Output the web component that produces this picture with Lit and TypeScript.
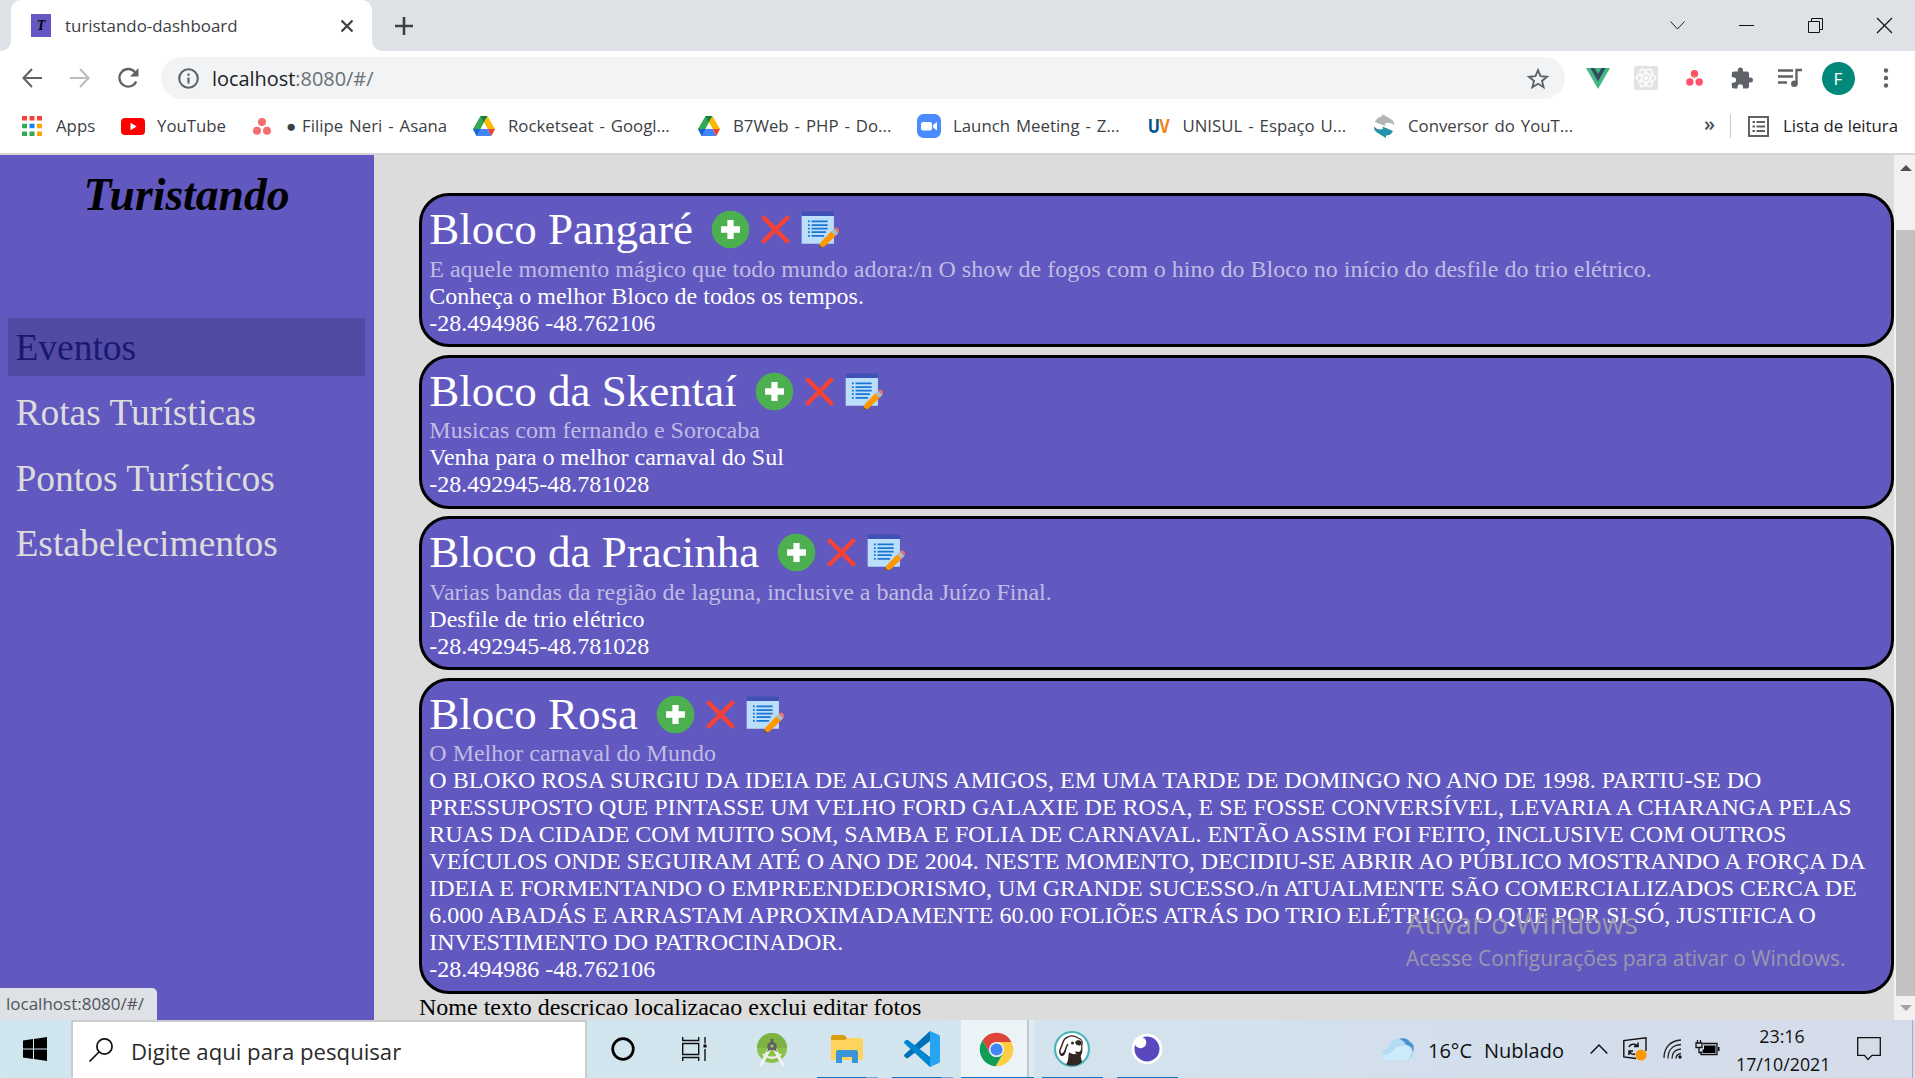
import { LitElement, html, svg, css } from "lit";
import { customElement } from "lit/decorators.js";

const icon = (w: number, h: number, body: unknown) =>
  html`<svg width=${w} height=${h} viewBox="0 0 ${w} ${h}" fill="none">${body}</svg>`;

const drive = icon(22, 20, svg`
  <path d="M7.5 0h7L11 6.3 4.2 19 0 13z" fill="#34a853"/>
  <path d="M7.5 0h7L11 6.3z" fill="#188038"/>
  <path d="M14.500 0 22 13h-7.300L11 6.300z" fill="#fbbc04"/>
  <path d="M7.300 13h7.400l3.600 7H3.700L0 13z" fill="#4285f4"/>
  <path d="M0 13h7.300l-3.600 7z" fill="#1967d2"/>
  <path d="M14.700 13H22l-3.700 7z" fill="#ea4335"/>`);

const bookmarks = [
  { label: "Apps", width: 101, cls: "", art: icon(20, 20, svg`
    <path d="M0 0h5v4.500H0zM7.500 0h5v4.500h-5zM15 0h5v4.500h-5z" fill="#f44336"/>
    <path d="M0 7.700h5v4.500H0zM0 15.500h5V20H0zM7.500 15.500h5V20h-5z" fill="#34a853"/>
    <path d="M7.500 7.700h5v4.500h-5z" fill="#1a82f7"/>
    <path d="M15 7.700h5v4.500h-5zM15 15.500h5V20h-5z" fill="#f9a602"/>`) },
  { label: "YouTube", width: 129, cls: "", art: icon(24, 17, svg`
    <rect width="24" height="17" rx="4" fill="#f00"/><path d="M9.500 4.800v7.400l6.200-3.700z" fill="#fff"/>`) },
  { label: "● Filipe Neri - Asana", width: 222, cls: "", art: icon(18, 17, svg`
    <g fill="#f66d6f"><circle cx="9" cy="4" r="4"/><circle cx="4" cy="12.800" r="4"/><circle cx="14" cy="12.800" r="4"/></g>`) },
  { label: "Rocketseat - Googl...", width: 225, cls: "", art: drive },
  { label: "B7Web - PHP - Do...", width: 220, cls: "", art: drive },
  { label: "Launch Meeting - Z...", width: 229.5, cls: "", art: icon(24, 24, svg`
    <rect width="24" height="24" rx="6.500" fill="#4a8cff"/><rect x="4" y="8" width="11" height="8.500" rx="2" fill="#fff"/><path d="M16 11l4-3v8.500l-4-3z" fill="#fff"/>`) },
  { label: "UNISUL - Espaço U...", width: 225.5, cls: "", art: html`<b class="uv"><span class="u">U</span><span class="v">V</span></b>` },
  { label: "Conversor do YouT...", width: 220, cls: "", art: icon(22, 24, svg`
    <path d="M2 8C4 3.500 7.500 2.500 9 2.500V0l8 4.500c3.500 2 4.500 4 4 7-2-3-6-3.500-9-2V12z" fill="#b4b5b6"/>
    <path d="M1 12c1.500 3 5 4 9 3l-.5-2.500L20 17c-2 4-5 4.500-7 4.500V24l-7.500-4.500C2 17.500.5 15 1 12z" fill="#2593ab"/>`) },
];

const extensions = [
  icon(24, 21, svg`<path d="M0 0h24L12 21z" fill="#41b883"/><path d="M4.500 0h4L12 6l3.500-6h4L12 13.500z" fill="#35495e"/>`),
  icon(24, 24, svg`<rect width="24" height="24" rx="2" fill="#e3e3e3"/>
    <g stroke="#fff" stroke-width="1.100"><ellipse cx="12" cy="12" rx="10" ry="4"/><ellipse cx="12" cy="12" rx="10" ry="4" transform="rotate(60 12 12)"/><ellipse cx="12" cy="12" rx="10" ry="4" transform="rotate(120 12 12)"/><circle cx="12" cy="12" r="8.500" stroke-width=".6"/></g><circle cx="12" cy="12" r="2" fill="#fff"/>`),
  icon(17, 16, svg`<circle cx="8.500" cy="3.800" r="3.700" fill="#ff5263"/><circle cx="3.800" cy="12" r="3.700" fill="#ff5270"/><circle cx="13.200" cy="12" r="3.700" fill="#ff5270"/><circle cx="8.500" cy="7" r="1.200" fill="#ff9a62"/>`),
  icon(22, 22, svg`<path d="M19.500 10.500H18V6.500c0-1.100-.9-2-2-2h-4V3a2.600 2.600 0 0 0-5.200 0v1.500h-4c-1.100 0-2 .9-2 2v3.800h1.600a2.700 2.700 0 0 1 0 5.400H.8v3.800c0 1.100.9 2 2 2h3.800V20a2.700 2.700 0 0 1 5.400 0v1.500h4c1.100 0 2-.9 2-2v-4h1.500a2.500 2.500 0 0 0 0-5z" fill="#5f6368"/>`),
  icon(24, 20, svg`<g stroke="#5f6368" stroke-width="2.300"><path d="M0 2.500h15M0 8.500h15M0 14.500h9M18.500 16V2H24"/></g><circle cx="16.400" cy="15.800" r="3.300" fill="#5f6368"/>`),
  html`<span class="avatar">F</span>`,
  icon(6, 20, svg`<g fill="#5f6368"><circle cx="3" cy="2.500" r="2.200"/><circle cx="3" cy="10" r="2.200"/><circle cx="3" cy="17.500" r="2.200"/></g>`),
];

const blocos = [
  { nome: "Bloco Pangaré", texto: "E aquele momento mágico que todo mundo adora:/n O show de fogos com o hino do Bloco no início do desfile do trio elétrico.", descricao: "Conheça o melhor Bloco de todos os tempos.", local: "-28.494986 -48.762106" },
  { nome: "Bloco da Skentaí", texto: "Musicas com fernando e Sorocaba", descricao: "Venha para o melhor carnaval do Sul", local: "-28.492945-48.781028" },
  { nome: "Bloco da Pracinha", texto: "Varias bandas da região de laguna, inclusive a banda Juízo Final.", descricao: "Desfile de trio elétrico", local: "-28.492945-48.781028" },
  { nome: "Bloco Rosa", texto: "O Melhor carnaval do Mundo", descricao: "O BLOKO ROSA SURGIU DA IDEIA DE ALGUNS AMIGOS, EM UMA TARDE DE DOMINGO NO ANO DE 1998. PARTIU-SE DO PRESSUPOSTO QUE PINTASSE UM VELHO FORD GALAXIE DE ROSA, E SE FOSSE CONVERSÍVEL, LEVARIA A CHARANGA PELAS RUAS DA CIDADE COM MUITO SOM, SAMBA E FOLIA DE CARNAVAL. ENTÃO ASSIM FOI FEITO, INCLUSIVE COM OUTROS VEÍCULOS ONDE SEGUIRAM ATÉ O ANO DE 2004. NESTE MOMENTO, DECIDIU-SE ABRIR AO PÚBLICO MOSTRANDO A FORÇA DA IDEIA E FORMENTANDO O EMPREENDEDORISMO, UM GRANDE SUCESSO./n ATUALMENTE SÃO COMERCIALIZADOS CERCA DE 6.000 ABADÁS E ARRASTAM APROXIMADAMENTE 60.00 FOLIÕES ATRÁS DO TRIO ELÉTRICO, O QUE POR SI SÓ, JUSTIFICA O INVESTIMENTO DO PATROCINADOR.", local: "-28.494986 -48.762106" },
];

const actions = html`<span class="actions">
  <svg viewBox="0 0 48 48"><circle cx="24" cy="24" r="21" fill="#4caf50"/><path d="M20.500 13.500h7v7h7v7h-7v7h-7v-7h-7v-7h7z" fill="#fff"/></svg>
  <svg viewBox="0 0 48 48"><path d="M9.500 9.500l29 29M38.500 9.500l-29 29" stroke="#f44336" stroke-width="5"/></svg>
  <svg viewBox="0 0 48 48"><path d="M3 8h36v32H3z" fill="#bbdefb"/><path d="M3 4h36v5H3z" fill="#3f51b5"/>
    <path d="M10 15h2M14 15h18M10 19h2M14 19h18M10 23h2M14 23h18M10 27h2M14 27h16M10 31h2M14 31h14" stroke="#1976d2" stroke-width="2"/>
    <path d="M22.500 44.500l1.500-6L36 26l5 5-12.500 12z" fill="#ff9800"/><path d="M36 26l3-3 5 5-3 3z" fill="#b0bec5"/><path d="M39 23l.8-.8c2.500-1.800 6 1.800 4.700 4.500l-.5 1.300z" fill="#e57373"/><path d="M22.500 44.500l.7-3 2.500 2.400z" fill="#37474f"/></svg>
</span>`;

const tasks = [
  { cls: "", art: icon(32, 36, svg`<circle cx="16" cy="17" r="15" fill="#8bc34a"/><path d="M1 17a15 15 0 0 1 30 0z" fill="#7cb342"/>
    <path d="M15 15 4.500 35M17 15l10.500 20" stroke="#f1f1f1" stroke-width="3.200"/><path d="M7 23c5 5 13 5 18 0" stroke="#eee" stroke-width="2.400"/><path d="M14.500 8h3v3a4.600 4.600 0 0 1 2.500 7l1 3-3-2h-4l-3 2 1-3a4.600 4.600 0 0 1 2.500-7z" fill="#616161"/><circle cx="16" cy="15" r="1.600" fill="#9ccc65"/>`) },
  { cls: "open stacked", art: icon(32, 28, svg`<path d="M0 2q0-2 2-2h11l3 3v5H0z" fill="#dd9f0c"/><path d="M0 5h14l3-2h13q2 0 2 2v20H0z" fill="#ffd45e"/><path d="M5 17q0-2 2-2h18q2 0 2 2v11h-6v-6h-10v6H5z" fill="#3b93d8"/>`) },
  { cls: "open stacked", art: icon(36, 36, svg`<path d="M26 0v10L4 27q-1 .5-2 0l-1.500-1.500q-1-1 0-2z" fill="#0070b8"/><path d="M26 36V26L4 9q-1-.5-2 0L.5 10.500q-1 1 0 2z" fill="#0086d1"/><path d="M26 0l9 4q1 .5 1 2v24q0 1.500-1 2l-9 4z" fill="#26a5f3"/>`) },
  { cls: "active", art: html`<svg width="35" height="35" viewBox="1 1 46 46"><path d="M5.540 12.030A22 22 0 0 1 43.600 14H24L15.340 29z" fill="#db4437"/><path d="M43.600 14A22 22 0 0 1 22.860 45.970L32.660 29 24 14z" fill="#ffcd40"/><path d="M22.860 45.970A22 22 0 0 1 5.540 12.030L15.340 29h17.320z" fill="#0f9d58"/><circle cx="24" cy="24" r="10" fill="#f1f1f1"/><circle cx="24" cy="24" r="8" fill="#4285f4"/></svg>` },
  { cls: "open", art: icon(36, 36, svg`<circle cx="18" cy="18" r="17" fill="#fff" stroke="#4fb3bd" stroke-width="2.200"/>
    <path d="M12 33.500c3-4 2-8 3-12 2 1 4 2 7 1.500 1 1 2 1 4-.5l2 8.500c-4 4-10 5-16 2.500z" fill="#332523"/>
    <path d="M14 6c3-2 7-1 10 1 3 1 5 3 4 6-1 4 1 7-1 10-1 3-3 4-4 2" stroke="#332523" stroke-width="1.200"/>
    <path d="M14 6c-4 1-5 4-6 8-1 3-3 5-2 8s3 2 4 0c2-3 2-7 4-9" stroke="#332523" stroke-width="1.500"/>
    <path d="M5.500 21c2 3 5 1 6-4 1 4-1 8-3 8s-3-1-3-4z" fill="#332523"/>
    <circle cx="18.500" cy="12" r="1.500" fill="#332523"/><path d="M21.500 10.500c1-1.500 5-2 6 .5 1 2-1 4-3 3.500s-4-2-3-4z" fill="#332523"/><path d="M21.500 20c3 2 5 1 5.500-2l1 3c-1 4-5 4-6.500 1z" fill="#332523"/>`) },
  { cls: "open", art: icon(32, 32, svg`<circle cx="16" cy="16" r="15.300" fill="#fff"/><circle cx="16" cy="16" r="12.500" fill="#5a49be"/><circle cx="9.500" cy="9.500" r="5.800" fill="#fff"/>`) },
];

@customElement("app-root")
export class AppRoot extends LitElement {
  static styles = css`
    :host { display: block; width: 1915px; height: 1078px; overflow: hidden; position: relative; font-family: "Open Sans", "Noto Sans", sans-serif; color: #3c4043; }
    * { box-sizing: border-box; }
    svg { display: block; flex: none; overflow: visible; }
    .screen { display: flex; flex-direction: column; height: 1078px; }
    .tabs { height: 51px; background: #dee1e6; display: flex; align-items: center; padding: 0 21px 0 11px; flex: none; }
    .tab { position: relative; width: 361px; height: 51px; background: #fff; border-radius: 10px 10px 0 0; display: flex; align-items: center; padding: 0 19px 0 20px; }
    .tab::before, .tab::after { content: ""; position: absolute; bottom: 0; width: 10px; height: 10px; }
    .tab::before { left: -10px; background: radial-gradient(circle at 0 0, #dee1e6 9.500px, #fff 10px); }
    .tab::after { right: -10px; background: radial-gradient(circle at 100% 0, #dee1e6 9.500px, #fff 10px); }
    .favicon { width: 20px; height: 23px; background: #6558c4; color: #000; font: italic bold 14px/23px "Liberation Serif", serif; text-align: center; margin-right: 14px; }
    .tab-title { flex: 1; font-size: 16.900px; white-space: nowrap; }
    .new-tab { margin-left: 23px; }
    .controls { margin-left: auto; display: flex; gap: 49px; }
    .controls span { width: 20px; height: 20px; display: grid; place-items: center; }
    .toolbar { height: 54px; flex: none; background: #fff; display: flex; align-items: center; padding-left: 20px; }
    .nav { display: flex; gap: 24px; }
    .nav span { width: 24px; display: grid; place-items: center; }
    .omnibox { width: 1404px; height: 42px; margin: 0 16px 0 21px; border-radius: 21px; background: #f1f3f4; display: flex; align-items: center; padding: 0 16px 0 17px; }
    .url { flex: 1; margin-left: 13px; font-size: 19.900px; color: #6b6f73; white-space: nowrap; }
    .host { color: #202124; }
    .extensions { display: flex; gap: 14px; }
    .extensions span.slot { width: 34px; height: 34px; display: grid; place-items: center; }
    .avatar { width: 33px; height: 33px; border-radius: 50%; background: #00897b; color: #fff; font-size: 17px; line-height: 33px; text-align: center; }
    .bookmarks { height: 48px; flex: none; background: #fff; padding: 0 17px 6px 20px; display: flex; align-items: center; font-size: 16.800px; white-space: nowrap; }
    .bookmark { display: flex; align-items: center; gap: 12px; flex: none; word-spacing: 1.600px; }
    .bookmark-icon { width: 24px; display: grid; place-items: center; flex: none; }
    .bookmark-label { margin-top: -2px; }
    .uv { font: bold 19px/24px "Open Sans", sans-serif; letter-spacing: -1px; transform: translateX(-1px) scaleX(.85); }
    .u { color: #00538b; } .v { color: #f5821f; }
    .more { margin-left: auto; width: 26px; display: block; font-size: 20px; line-height: 20px; color: #4d5156; font-weight: 600; margin-top: -4px; }
    .reading { border-left: 1px solid #c8cacd; height: 24px; padding-left: 17px; display: flex; align-items: center; gap: 14px; color: #202124; }
    .page { height: 867px; flex: none; border-top: 2px solid #d6d6d6; background: #dcdcdc; display: flex; font-family: "Liberation Serif", "Times New Roman", serif; position: relative; }
    .sidebar { width: 374px; flex: none; background: #6158c0; padding: 0 9px 0 8px; color: #dcdcdc; }
    .logo { height: 163px; padding-top: 11px; text-align: center; font: italic bold 45.600px/58px "Liberation Serif", serif; color: #000; }
    .menu { display: flex; flex-direction: column; gap: 7.500px; font-size: 37.500px; line-height: 43px; }
    .menu-item { padding: 7.500px 7.400px; height: 58px; }
    .menu-item.selected { background: #524ba3; color: #191970; }
    .main { flex: 1; padding: 38px 0 0 45px; overflow: hidden; font-size: 24px; line-height: 27px; color: #000; }
    .cards { display: flex; flex-direction: column; gap: 7.500px; }
    .card { background: #6158c0; border: 3px solid #000; border-radius: 30px; padding: 7.500px 7px 7.500px 7.300px; color: #fff; }
    .card-head { height: 52px; display: flex; align-items: center; font-size: 45px; line-height: 51px; white-space: nowrap; gap: 16px; }
    .actions { display: flex; gap: 2px; }
    .actions svg { width: 43px; height: 43px; }
    .muted { color: #c0bce4; }
    .scrollbar { width: 21px; flex: none; background: #f1f1f1; display: flex; flex-direction: column; align-items: center; padding: 10px 0 9px 2px; }
    .thumb { width: 19px; height: 766px; margin: 59px 0 9px; background: #c1c1c1; }
    .status { position: absolute; left: 0; bottom: 0; width: 157px; height: 32px; border-radius: 0 5px 0 0; background: #dee1e6; font: 17px/32px "Open Sans", sans-serif; color: #50545a; padding-left: 6px; white-space: nowrap; }
    .watermark { position: absolute; left: 1406px; top: 747px; font-family: "Open Sans", sans-serif; color: #9a98ad; white-space: nowrap; }
    .watermark-title { font-size: 28.700px; line-height: 42px; }
    .watermark-text { font-size: 20.900px; line-height: 28px; }
    .taskbar { height: 58px; flex: none; display: flex; background: linear-gradient(90deg, #cfe6ee, #d3e5ee 50%, #d3dfec 75%, #d5dbe9); color: #111; }
    .start { width: 71px; display: grid; place-items: center; }
    .start svg { transform: translateX(-1px); }
    .search { width: 516px; background: #fff; border: 2px solid #ccc; border-bottom: 0; display: flex; align-items: center; padding-left: 16px; gap: 18px; font-size: 22.150px; white-space: nowrap; color: #2b2b2b; }
    .search span { margin-top: 1px; }
    .cortana { width: 72px; display: grid; place-items: center; }
    .taskview { width: 71px; margin-right: 4px; display: grid; place-items: center; }
    .task { width: 75px; display: grid; place-items: center; position: relative; }
    .task.open::after, .task.active::after { content: ""; position: absolute; bottom: 0; left: 8px; width: 61px; height: 1px; background: #0f74c0; }
    .task.stacked::after { background: linear-gradient(90deg, #0f74c0 49px, #76aad6 49px); }
    .task.active { background: linear-gradient(90deg, transparent 2px, #ebf3f7 2px 68px, #bccbd5 68px 70px, #dfebf1 70px 75px); }
    .task.active::after { left: 2px; width: 73px; }
    .tray { margin-left: auto; display: grid; grid-template-columns: 47px 56px 105px 33px 40px 32px 41px 121px 55px 3px; align-items: center; font-size: 20px; white-space: nowrap; }
    .tray span { margin-top: 2px; margin-left: -1px; }
    .clock { width: 92px; margin-top: 2px; text-align: center; font-size: 17.800px; line-height: 28px; }
    .tray .peek { margin: 0; height: 58px; border-left: 1px solid #a3afba; }
  `;

  render() {
    return html`<div class="screen">
      <div class="tabs">
        <div class="tab">
          <span class="favicon">T</span><span class="tab-title">turistando-dashboard</span>
          ${icon(12, 12, svg`<path d="M.5.5l11 11M11.500.5l-11 11" stroke="#3c4043" stroke-width="2.200"/>`)}
        </div>
        <span class="new-tab">${icon(18, 18, svg`<path d="M9 0v18M0 9h18" stroke="#3c4043" stroke-width="2.600"/>`)}</span>
        <div class="controls">
          <span>${icon(15, 9, svg`<path d="M.5.5l7 7.500 7-7.500" stroke="#222"/>`)}</span>
          <span>${icon(15, 1, svg`<path d="M0 .5h15" stroke="#111"/>`)}</span>
          <span>${icon(15, 15, svg`<path d="M.5 3.500h11v11H.5zM3.500 3.500v-3h11v11h-3" stroke="#111"/>`)}</span>
          <span>${icon(15, 15, svg`<path d="M0 0l15 15M15 0L0 15" stroke="#111" stroke-width="1.200"/>`)}</span>
        </div>
      </div>
      <div class="toolbar">
        <div class="nav">
          <span>${icon(20, 20, svg`<path d="M20 10H1.500M10 1 1.500 10l8.500 9" stroke="#5f6368" stroke-width="2.100"/>`)}</span>
          <span>${icon(20, 20, svg`<path d="M0 10h18.500M10 1l8.500 9-8.500 9" stroke="#babcbe" stroke-width="2.100"/>`)}</span>
          <span>${icon(21, 20, svg`<path d="M18.200 13.500A8.800 8.800 0 1 1 17 4.200" stroke="#5f6368" stroke-width="2.300"/><path d="M20.500 0v8.500H12z" fill="#5f6368"/>`)}</span>
        </div>
        <div class="omnibox">
          ${icon(21, 21, svg`<circle cx="10.500" cy="10.500" r="9.300" stroke="#5f6368" stroke-width="2.100"/><path d="M10.500 9.500v6M10.500 5.500v2.200" stroke="#5f6368" stroke-width="2.200"/>`)}
          <span class="url"><span class="host">localhost</span>:8080/#/</span>
          ${icon(22, 21, svg`<path d="M11 2.200l2.500 6 6.500.5-5 4.200 1.600 6.300L11 15.800l-5.600 3.400L7 12.900 2 8.700l6.500-.5z" stroke="#5f6368" stroke-width="1.900"/>`)}
        </div>
        <div class="extensions">${extensions.map((e) => html`<span class="slot">${e}</span>`)}</div>
      </div>
      <div class="bookmarks">
        ${bookmarks.map((b) => html`<div class="bookmark" style="width:${b.width}px"><span class="bookmark-icon">${b.art}</span><span class="bookmark-label">${b.label}</span></div>`)}
        <span class="more">»</span>
        <div class="reading">
          ${icon(21, 21, svg`<rect x="1" y="1" width="19" height="19" stroke="#5f6368" stroke-width="2"/><path d="M4.500 6h2.500M8.500 6H17M4.500 10.500h2.500M8.500 10.500H17M4.500 15h2.500M8.500 15H17" stroke="#5f6368" stroke-width="2"/>`)}
          <span class="bookmark-label">Lista de leitura</span>
        </div>
      </div>
      <div class="page">
        <div class="sidebar">
          <div class="logo">Turistando</div>
          <div class="menu">
            ${["Eventos", "Rotas Turísticas", "Pontos Turísticos", "Estabelecimentos"].map((m, i) => html`<div class="menu-item ${i === 0 ? "selected" : ""}">${m}</div>`)}
          </div>
        </div>
        <div class="main">
          <div class="cards">
            ${blocos.map((b) => html`<div class="card">
              <div class="card-head"><span>${b.nome}</span>${actions}</div>
              <div class="muted">${b.texto}</div>
              <div>${b.descricao}</div>
              <div>${b.local}</div>
            </div>`)}
          </div>
          <div>Nome texto descricao localizacao exclui editar fotos</div>
        </div>
        <div class="scrollbar">
          ${icon(12, 6, svg`<path d="M6 0l6 6H0z" fill="#505050"/>`)}
          <div class="thumb"></div>
          ${icon(12, 6, svg`<path d="M0 0h12L6 6z" fill="#a3a3a3"/>`)}
        </div>
        <div class="status">localhost:8080/#/</div>
        <div class="watermark">
          <div class="watermark-title">Ativar o Windows</div>
          <div class="watermark-text">Acesse Configurações para ativar o Windows.</div>
        </div>
      </div>
      <div class="taskbar">
        <div class="start">${icon(24, 24, svg`<path d="M0 3.500l10-1.400v9.400H0zM11 2l13-2v11.500H11zM0 12.500h10v9.400L0 20.500zM11 12.500h13V24l-13-2z" fill="#000"/>`)}</div>
        <div class="search">
          ${icon(24, 24, svg`<circle cx="15.500" cy="8.500" r="7.600" stroke="#111" stroke-width="1.700"/><path d="M10 14 .5 23.500" stroke="#111" stroke-width="1.700"/>`)}
          <span>Digite aqui para pesquisar</span>
        </div>
        <div class="cortana">${icon(24, 24, svg`<circle cx="12" cy="12" r="10.300" stroke="#000" stroke-width="2.700"/>`)}</div>
        <div class="taskview">${icon(25, 24, svg`<path d="M.7 0v3.500h16V0M.7 24v-3.500h16V24M.7 6.500h16v11H.7zM23 0v6.500M23 12v12" stroke="#111" stroke-width="1.400"/><path d="M21.500 7.500h3v3h-3z" fill="#000"/>`)}</div>
        ${tasks.map((t) => html`<div class="task ${t.cls}">${t.art}</div>`)}
        <div class="tray">
          ${icon(32, 23, svg`<path d="M17 1c5-2 9 0 11 3 5 2 4 8 3 11z" fill="#4a92cf"/><path d="M8 22.500C-3 22.500-2 11 6 11 6 0 21-2 24 7c9 0 10 15 0 15.500z" fill="#b5dcf5"/><path d="M8 22.500c-6 0-8-3-7.500-6C6 18 11 14 13 10c4-3 10-1 11-3 3 1 6 4 5 8-1 4-2 7-7 7.500z" fill="#cdebfb"/>`)}
          <span>16°C</span><span>Nublado</span>
          ${icon(18, 10, svg`<path d="M.7 9.500 9 1l8.300 8.500" stroke="#111" stroke-width="1.500"/>`)}
          ${icon(24, 24, svg`<path d="M13 21.500.8 20V3.500L23 .8V14" stroke="#111" stroke-width="1.400"/><path d="M6 10c1-3 6-4 8.500-1M15 5.500v4h-4M12 17c-3 1-5-1-5.500-3M6 18v-4h4" stroke="#111" stroke-width="1.500"/><circle cx="18" cy="18" r="5.600" fill="#ff9800"/>`)}
          ${icon(20, 20, svg`<g stroke="#222" stroke-width="1.300"><path d="M1 19C1 8 8 1.500 18 1"/><path d="M5 19.500C5 11 10 6 18 5.500"/><path d="M9 19.500C9 13.500 12.500 10.500 18 10"/><path d="M13 19.500C13 16.500 15 15 18 14.500"/></g><circle cx="17" cy="18" r="1.700" fill="#111"/>`)}
          ${icon(25, 18, svg`<path d="M8 3.500h14v11H6v-3" stroke="#111" stroke-width="1.300"/><path d="M9 5.500h11.500v7.500H7.500v-3L9 9z" fill="#000"/><path d="M23 7h1.500v4H23z" fill="#000"/><path d="M1 3h6v4.500H1zM2.500 0v3M5.500 0v3M4 7.500v5h3" stroke="#111" stroke-width="1.300"/>`)}
          <div class="clock"><div>23:16</div><div>17/10/2021</div></div>
          ${icon(24, 24, svg`<path d="M.7.7h22.600v17.600H15L11 22.500 7.500 18.300H.7z" stroke="#111" stroke-width="1.300"/>`)}
          <span class="peek"></span>
        </div>
      </div>
    </div>`;
  }
}
